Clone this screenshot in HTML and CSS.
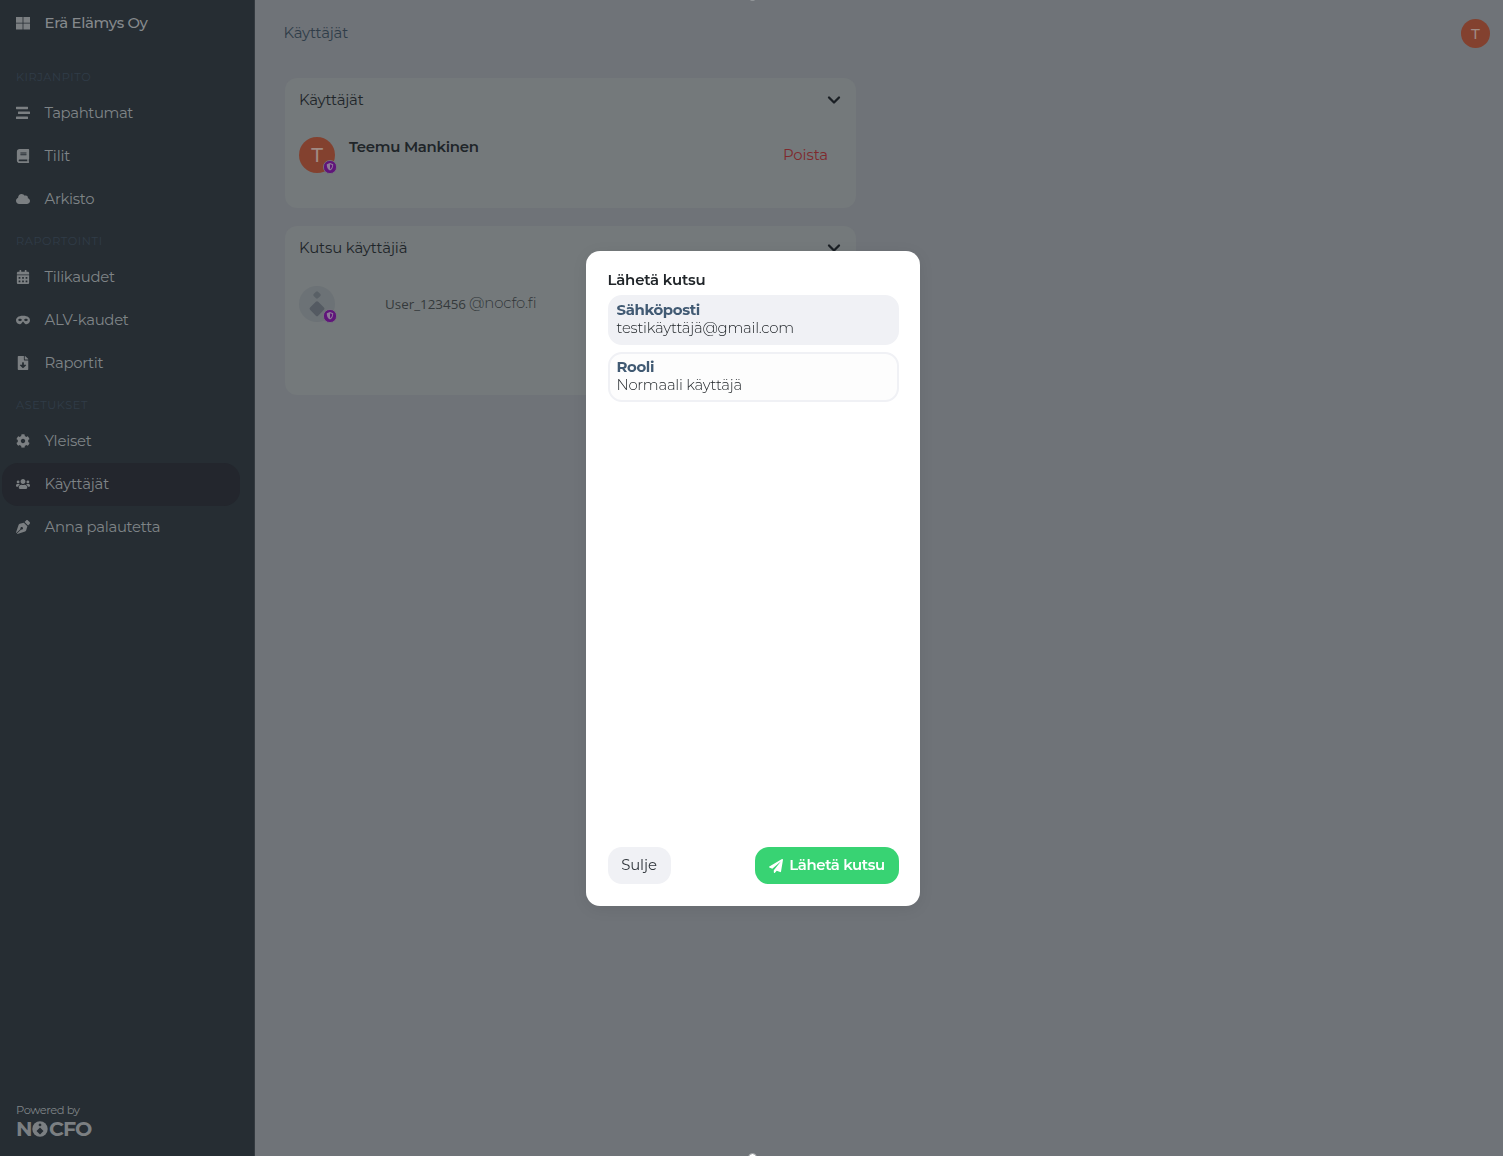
FILE: index.html
```html
<!DOCTYPE html>
<html lang="fi">
<head>
<meta charset="utf-8">
<title>Käyttäjät</title>
<link rel="stylesheet" href="styles.css">
</head>
<body>
<div class="app">
  <aside class="sidebar">
    <div class="brand"><svg class="icon" viewBox="0 0 14 14"><path d="M0 1h6.600v5.800H0zM7.400 1H14v5.800H7.400zM0 7.600h6.600v5.900H0zM7.400 7.600H14v5.900H7.400z"/></svg><span class="brand-name">Erä Elämys Oy</span></div>
    <nav class="nav">
      <h2 class="label">KIRJANPITO</h2>
      <a class="item"><svg class="icon" viewBox="0 0 14 14"><path d="M.4.7h11.200q.4 0 .4.4v1.700q0 .4-.4.4H.4q-.4 0-.4-.4V1.100q0-.4.4-.4zM2.400 5.600h11.200q.4 0 .4.4v1.700q0 .4-.4.4H2.400q-.4 0-.4-.4V6q0-.4.4-.4zM.4 10.600h11.200q.4 0 .4.4v1.700q0 .4-.4.4H.4q-.4 0-.4-.4V11q0-.4.4-.4z"/></svg><span class="t-tap">Tapahtumat</span></a>
      <a class="item"><svg class="icon" viewBox="0 0 448 512"><path d="M448 360V24c0-13.300-10.700-24-24-24H96C43 0 0 43 0 96v320c0 53 43 96 96 96h328c13.300 0 24-10.700 24-24v-16c0-7.500-3.500-14.300-8.900-18.700-4.200-15.400-4.200-59.300 0-74.700 5.400-4.300 8.900-11.100 8.900-18.600zM128 134c0-3.300 2.700-6 6-6h212c3.300 0 6 2.700 6 6v20c0 3.300-2.700 6-6 6H134c-3.300 0-6-2.700-6-6v-20zm0 64c0-3.300 2.700-6 6-6h212c3.300 0 6 2.700 6 6v20c0 3.300-2.700 6-6 6H134c-3.300 0-6-2.700-6-6v-20zm253.400 250H96c-17.700 0-32-14.300-32-32 0-17.600 14.400-32 32-32h285.400c-1.900 17.100-1.900 46.900 0 64z"/></svg><span class="t-tilit">Tilit</span></a>
      <a class="item"><svg class="icon" viewBox="0 0 640 512"><path d="M537.600 226.600c4.100-10.700 6.400-22.400 6.400-34.600 0-53-43-96-96-96-19.700 0-38.100 6-53.300 16.200C367 64.200 315.300 32 256 32c-88.400 0-160 71.600-160 160 0 2.700.1 5.400.2 8.100C40.200 219.800 0 273.200 0 336c0 79.500 64.500 144 144 144h368c70.700 0 128-57.300 128-128 0-61.900-44-113.600-102.400-125.400z"/></svg><span>Arkisto</span></a>
      <h2 class="label">RAPORTOINTI</h2>
      <a class="item"><svg class="icon" viewBox="0 0 448 512"><path d="M0 464c0 26.500 21.500 48 48 48h352c26.500 0 48-21.500 48-48V192H0zM72 256h48q8 0 8 8v48q0 8-8 8H72q-8 0-8-8v-48q0-8 8-8zm128 0h48q8 0 8 8v48q0 8-8 8h-48q-8 0-8-8v-48q0-8 8-8zm128 0h48q8 0 8 8v48q0 8-8 8h-48q-8 0-8-8v-48q0-8 8-8zM72 384h48q8 0 8 8v48q0 8-8 8H72q-8 0-8-8v-48q0-8 8-8zm128 0h48q8 0 8 8v48q0 8-8 8h-48q-8 0-8-8v-48q0-8 8-8zm128 0h48q8 0 8 8v48q0 8-8 8h-48q-8 0-8-8v-48q0-8 8-8z" fill-rule="evenodd"/><path d="M400 64h-48V16c0-8.800-7.200-16-16-16h-32c-8.800 0-16 7.200-16 16v48H160V16c0-8.800-7.200-16-16-16h-32c-8.800 0-16 7.200-16 16v48H48C21.500 64 0 85.500 0 112v48h448v-48c0-26.500-21.500-48-48-48z"/></svg><span>Tilikaudet</span></a>
      <a class="item"><svg class="icon" viewBox="0 0 640 512"><path fill-rule="evenodd" d="M320.670 64c-442.600 0-357.570 384-158.460 384 39.900 0 77.470-20.690 101.420-55.860l25.730-37.790c15.660-22.990 46.970-22.990 62.630 0l25.730 37.790C401.660 427.310 439.230 448 479.130 448c189.860 0 290.630-384-158.460-384zM184 308.360c-41.060 0-67.760-25.660-80.080-41.050-5.230-6.530-5.230-16.090 0-22.630 12.320-15.400 39.010-41.050 80.080-41.050s67.760 25.660 80.080 41.050c5.230 6.530 5.230 16.090 0 22.630-12.320 15.400-39.020 41.050-80.080 41.050zm272 0c-41.060 0-67.760-25.660-80.080-41.050-5.230-6.530-5.230-16.090 0-22.630 12.320-15.400 39.010-41.050 80.080-41.050s67.760 25.660 80.080 41.050c5.230 6.530 5.230 16.090 0 22.630-12.320 15.400-39.020 41.050-80.080 41.050z"/></svg><span>ALV-kaudet</span></a>
      <a class="item"><svg class="icon" viewBox="0 0 384 512"><path d="M224 136V0H24C10.700 0 0 10.700 0 24v464c0 13.300 10.700 24 24 24h336c13.300 0 24-10.700 24-24V160H248c-13.200 0-24-10.800-24-24zm76.450 211.360l-96.420 95.700c-6.650 6.610-17.390 6.610-24.040 0l-96.420-95.700C73.420 337.290 80.540 320 94.820 320H160v-80c0-8.840 7.160-16 16-16h32c8.840 0 16 7.160 16 16v80h65.180c14.280 0 21.400 17.290 11.270 27.360zM377 105L279.100 7c-4.500-4.500-10.600-7-17-7H256v128h128v-6.100c0-6.300-2.500-12.400-7-16.900z"/></svg><span>Raportit</span></a>
      <h2 class="label">ASETUKSET</h2>
      <a class="item"><svg class="icon" viewBox="0 0 512 512"><path d="M487.400 315.700l-42.600-24.600c4.300-23.200 4.300-47 0-70.200l42.600-24.600c4.900-2.800 7.100-8.600 5.500-14-11.100-35.600-30-67.800-54.700-94.600-3.800-4.100-10-5.100-14.800-2.300L380.800 110c-17.900-15.400-38.500-27.300-60.800-35.100V25.800c0-5.600-3.900-10.500-9.400-11.700-36.700-8.200-74.300-7.800-109.200 0-5.500 1.200-9.400 6.100-9.400 11.700V75c-22.200 7.900-42.800 19.800-60.800 35.100L88.700 85.500c-4.900-2.800-11-1.900-14.800 2.300-24.700 26.700-43.600 58.900-54.700 94.600-1.700 5.400.6 11.200 5.500 14L67.300 221c-4.300 23.200-4.300 47 0 70.200l-42.600 24.600c-4.900 2.800-7.100 8.600-5.500 14 11.100 35.600 30 67.800 54.700 94.600 3.800 4.100 10 5.100 14.800 2.300l42.600-24.600c17.900 15.400 38.500 27.300 60.800 35.100v49.200c0 5.600 3.900 10.500 9.400 11.700 36.700 8.200 74.300 7.800 109.200 0 5.500-1.200 9.400-6.100 9.400-11.700v-49.200c22.200-7.900 42.800-19.800 60.800-35.100l42.600 24.600c4.900 2.800 11 1.900 14.800-2.300 24.700-26.700 43.600-58.900 54.700-94.600 1.500-5.500-.7-11.300-5.600-14.100zM256 336c-44.100 0-80-35.900-80-80s35.900-80 80-80 80 35.900 80 80-35.900 80-80 80z"/></svg><span class="t-kay">Yleiset</span></a>
      <a class="item active"><svg class="icon" viewBox="0 0 640 512"><path d="M96 224c35.300 0 64-28.700 64-64s-28.700-64-64-64-64 28.700-64 64 28.700 64 64 64zm448 0c35.300 0 64-28.700 64-64s-28.700-64-64-64-64 28.700-64 64 28.700 64 64 64zm32 32h-64c-17.600 0-33.500 7.100-45.100 18.600 40.300 22.100 68.900 62 75.100 109.400h66c17.700 0 32-14.300 32-32v-32c0-35.300-28.700-64-64-64zm-256 0c61.900 0 112-50.100 112-112S381.900 32 320 32 208 82.100 208 144s50.100 112 112 112zm76.800 32h-8.300c-20.800 10-43.900 16-68.500 16s-47.600-6-68.500-16h-8.300C179.600 288 128 339.600 128 403.200V432c0 26.500 21.500 48 48 48h288c26.500 0 48-21.500 48-48v-28.800c0-63.600-51.600-115.200-115.200-115.200zm-223.700-13.400C161.500 263.100 145.600 256 128 256H64c-35.300 0-64 28.700-64 64v32c0 17.700 14.300 32 32 32h65.900c6.300-47.400 34.900-87.300 75.200-109.400z"/></svg><span class="t-kay">Käyttäjät</span></a>
      <a class="item"><svg class="icon" viewBox="0 0 512 512"><path d="M136.600 138.790a64.003 64.003 0 0 0-43.310 41.350L0 460l14.690 14.690L164.800 324.580c-2.990-6.260-4.800-13.180-4.800-20.580 0-26.510 21.490-48 48-48s48 21.490 48 48-21.490 48-48 48c-7.400 0-14.320-1.810-20.580-4.800L37.310 497.310 52 512l279.860-93.290a64.003 64.003 0 0 0 41.350-43.310L416 224 288 96l-151.400 42.790zm361.340-64.620l-60.110-60.110c-18.750-18.750-49.160-18.750-67.910 0l-56.550 56.550 128.020 128.020 56.550-56.550c18.750-18.750 18.750-49.150 0-67.910z"/></svg><span>Anna palautetta</span></a>
    </nav>
    <footer class="powered">
      <span class="powered-text">Powered by</span>
      <div class="logo"><span>N</span><svg class="logo-o" viewBox="0 0 16 16"><circle cx="8" cy="8" r="7.700"/><path class="cut" d="M8 2.200l1.700 1.700L8 5.600 6.300 3.900zM8 6.500l3.500 3.500L8 13.500 4.500 10z"/></svg><span class="cfo">CFO</span></div>
    </footer>
  </aside>
  <main class="main">
    <header class="topbar"><h1 class="title t-kay">Käyttäjät</h1><span class="avatar small">T</span></header>
    <section class="card">
      <div class="card-head"><span class="t-kay">Käyttäjät</span><svg class="chev" viewBox="0 0 14 10"><path d="M2 2.500l5 5 5-5"/></svg></div>
      <div class="row">
        <span class="avatar">T<svg class="badge" viewBox="0 0 14 14"><circle class="ring" cx="7" cy="7" r="6.600"/><path class="shield" d="M7 3l3.200 1.200c.1 2.900-.8 5.100-3.200 6.300-2.400-1.200-3.300-3.400-3.200-6.300z"/><path class="half" d="M7 4.200l2.200.8c0 2-.7 3.400-2.200 4.300z"/></svg></span>
        <strong class="name">Teemu Mankinen</strong>
        <span class="remove">Poista</span>
      </div>
    </section>
    <section class="card invites">
      <div class="card-head"><span class="t-kutsu">Kutsu käyttäjiä</span><svg class="chev" viewBox="0 0 14 10"><path d="M2 2.500l5 5 5-5"/></svg></div>
      <div class="row">
        <span class="avatar blank"><svg class="person" viewBox="0 0 36 36"><rect x="15" y="6" width="6" height="6" rx="1.300" transform="rotate(45 18 9)"/><rect class="torso" x="12.300" y="17" width="11.400" height="11.400" rx="1.600" transform="rotate(45 18 22.700)"/></svg><svg class="badge" viewBox="0 0 14 14"><circle class="ring" cx="7" cy="7" r="6.600"/><path class="shield" d="M7 3l3.200 1.200c.1 2.900-.8 5.100-3.200 6.300-2.400-1.200-3.300-3.400-3.200-6.300z"/><path class="half" d="M7 4.200l2.200.8c0 2-.7 3.400-2.200 4.300z"/></svg></span>
        <span class="mail"><span class="user">User_123456</span><span class="domain">@nocfo.fi</span></span>
      </div>
    </section>
  </main>
</div>
<div class="overlay">
  <div class="modal">
    <h2 class="modal-title">Lähetä kutsu</h2>
    <div class="field filled"><b>Sähköposti</b><span>testikäyttäjä@gmail.com</span></div>
    <div class="field"><b>Rooli</b><span>Normaali käyttäjä</span></div>
    <div class="actions">
      <button class="btn close">Sulje</button>
      <button class="btn send"><svg class="plane" viewBox="0 0 512 512"><path d="M476 3.200L12.500 270.600c-18.100 10.400-15.800 35.600 2.200 43.200L121 358.400l287.300-253.200c5.500-4.900 13.300 2.600 8.600 8.300L176 407v80.500c0 23.600 28.500 32.900 42.500 15.800L282 426l124.600 52.200c14.200 6 30.400-2.900 33-18.200l72-432C515 7.800 493.300-6.800 476 3.200z"/></svg><span>Lähetä kutsu</span></button>
    </div>
  </div>
  <i class="handle top"></i><i class="handle bottom"></i>
</div>
</body>
</html>
```
FILE: styles.css
```css
* { box-sizing: border-box; }
body { margin: 0; font: 14.9px/20px Montserrat, Inter, sans-serif; color: #202529; background: #6f7378; overflow: hidden; }
h1, h2 { margin: 0; font-size: inherit; font-weight: 400; }
.app { display: flex; height: 1156px; }

.sidebar { width: 255px; flex: none; display: flex; flex-direction: column; background: #262d33; color: #7f8487; border-right: 1px solid #343a40; padding-left: 2px; }
.brand { height: 57px; padding: 13px 0 0 14px; display: flex; align-items: flex-start; gap: 14.5px; font-weight: 500; letter-spacing: -.33px; color: #85898c; }
.brand .icon { margin-top: 2.5px; }
.icon { width: 14px; height: 14px; flex: none; fill: #7b7f82; }
.nav { flex: 1; }
.label { height: 35px; padding: 13px 0 0 14px; font-size: 11.3px; line-height: 14px; letter-spacing: .58px; color: #303c48; white-space: nowrap; }
.item { height: 43px; width: 238px; padding: 0 0 2px 14px; display: flex; align-items: center; gap: 14.5px; border-radius: 16px; white-space: nowrap; letter-spacing: -.3px; }
.item .icon { margin-top: 1px; }
.t-tap { letter-spacing: -.4px; }
.t-tilit { letter-spacing: -.2px; }
.t-kay { letter-spacing: -.2px; }
.t-kutsu { letter-spacing: -.12px; }
.active { background: #23262d; }
.powered { padding: 0 0 17px 14px; color: #7f8487; }
.powered-text { display: block; margin-bottom: 1px; font-size: 11.5px; line-height: 16px; letter-spacing: -.45px; }
.logo { display: flex; align-items: center; height: 20px; font-size: 20.5px; line-height: 20px; font-weight: 700; color: #7b7f82; }
.logo-o { width: 16px; height: 16px; margin: 0 1px 0 -.5px; fill: #7b7f82; }
.cfo { letter-spacing: -1px; }
.cut { fill: #262d33; }

.main { flex: 1; padding-left: 30px; }
.topbar { height: 78px; padding: 19px 13px 0 0; display: flex; justify-content: space-between; align-items: flex-start; }
.title { margin: 4px 0 0 -1.5px; color: #303d49; }
.card { width: 571px; height: 130px; margin-bottom: 18px; padding: 12px 15px 12px 14px; border-radius: 12px; background: #74797b; }
.invites { height: 169px; }
.card-head { height: 20px; display: flex; justify-content: space-between; align-items: center; }
.chev { width: 14px; height: 10px; fill: none; stroke: #1a1f24; stroke-width: 2.3; stroke-linecap: round; stroke-linejoin: round; }
.row { margin-top: 27px; display: flex; height: 36px; align-items: center; }
.invites .row { margin-top: 28px; }
.avatar { position: relative; width: 36px; height: 36px; flex: none; border-radius: 50%; background: #83412f; color: #a08a83; font-size: 20px; font-weight: 500; display: flex; align-items: center; justify-content: center; }
.small { width: 29px; height: 29px; font-size: 15px; }
.blank { background: #6c7276; }
.person { width: 36px; height: 36px; fill: #596066; }
.torso { fill: #545a62; }
.badge { position: absolute; right: -2px; bottom: -1px; width: 14px; height: 14px; }
.ring { fill: #60157b; stroke: #777b7d; stroke-width: .8; }
.shield { fill: #8f7b98; }
.half { fill: #60157b; }
.name { margin: -16px 0 0 14px; font-weight: 600; letter-spacing: -.28px; }
.remove { margin: 0 13px 0 auto; letter-spacing: -.1px; color: #7f292d; }
.mail { margin: -2px 0 0 50px; display: flex; gap: 3px; white-space: nowrap; }
.user { font: 13.4px/20px "Open Sans", sans-serif; margin-top: 1px; color: #34393c; }
.domain { color: #303538; font-weight: 300; letter-spacing: -.1px; }

.overlay { position: fixed; inset: 0; display: flex; align-items: center; justify-content: center; }
.modal { width: 334px; height: 655px; margin: 1px 0 0 3px; padding: 19px 21px 22px 21.5px; border-radius: 14px; background: #fff; box-shadow: 0 3px 16px rgba(0, 0, 0, .07); display: flex; flex-direction: column; }
.modal-title { font-weight: 600; margin-bottom: 5px; letter-spacing: -.18px; color: #202529; }
.field { height: 50px; margin-bottom: 7px; padding: 4px 7px; border: 2px solid #f0f1f5; border-radius: 14px; background: #fdfdfd; line-height: 18px; white-space: nowrap; }
.filled { background: #f0f1f5; }
.field b, .field span { display: block; width: max-content; }
.field b { font-weight: 700; letter-spacing: -.36px; color: #415a73; }
.field span { font-weight: 300; letter-spacing: -.24px; color: #202529; }
.actions { margin-top: auto; display: flex; justify-content: space-between; }
.btn { height: 37px; border: 0; border-radius: 14px; font: inherit; padding: 0 0 1px; display: flex; align-items: center; justify-content: center; white-space: nowrap; }
.close { width: 63px; background: #f0f1f5; letter-spacing: -.1px; color: #30363c; }
.send { width: 144px; gap: 6px; background: #38d373; letter-spacing: -.4px; color: #fff; font-weight: 600; }
.plane { width: 14px; height: 14px; margin-top: 1px; fill: #fff; }
.handle { position: absolute; left: 748px; width: 9px; height: 9px; border-radius: 50%; background: #fff; border: 1px solid #969a9d; }
.top { top: -8px; background: #969a9d; }
.bottom { bottom: -6px; }
```
